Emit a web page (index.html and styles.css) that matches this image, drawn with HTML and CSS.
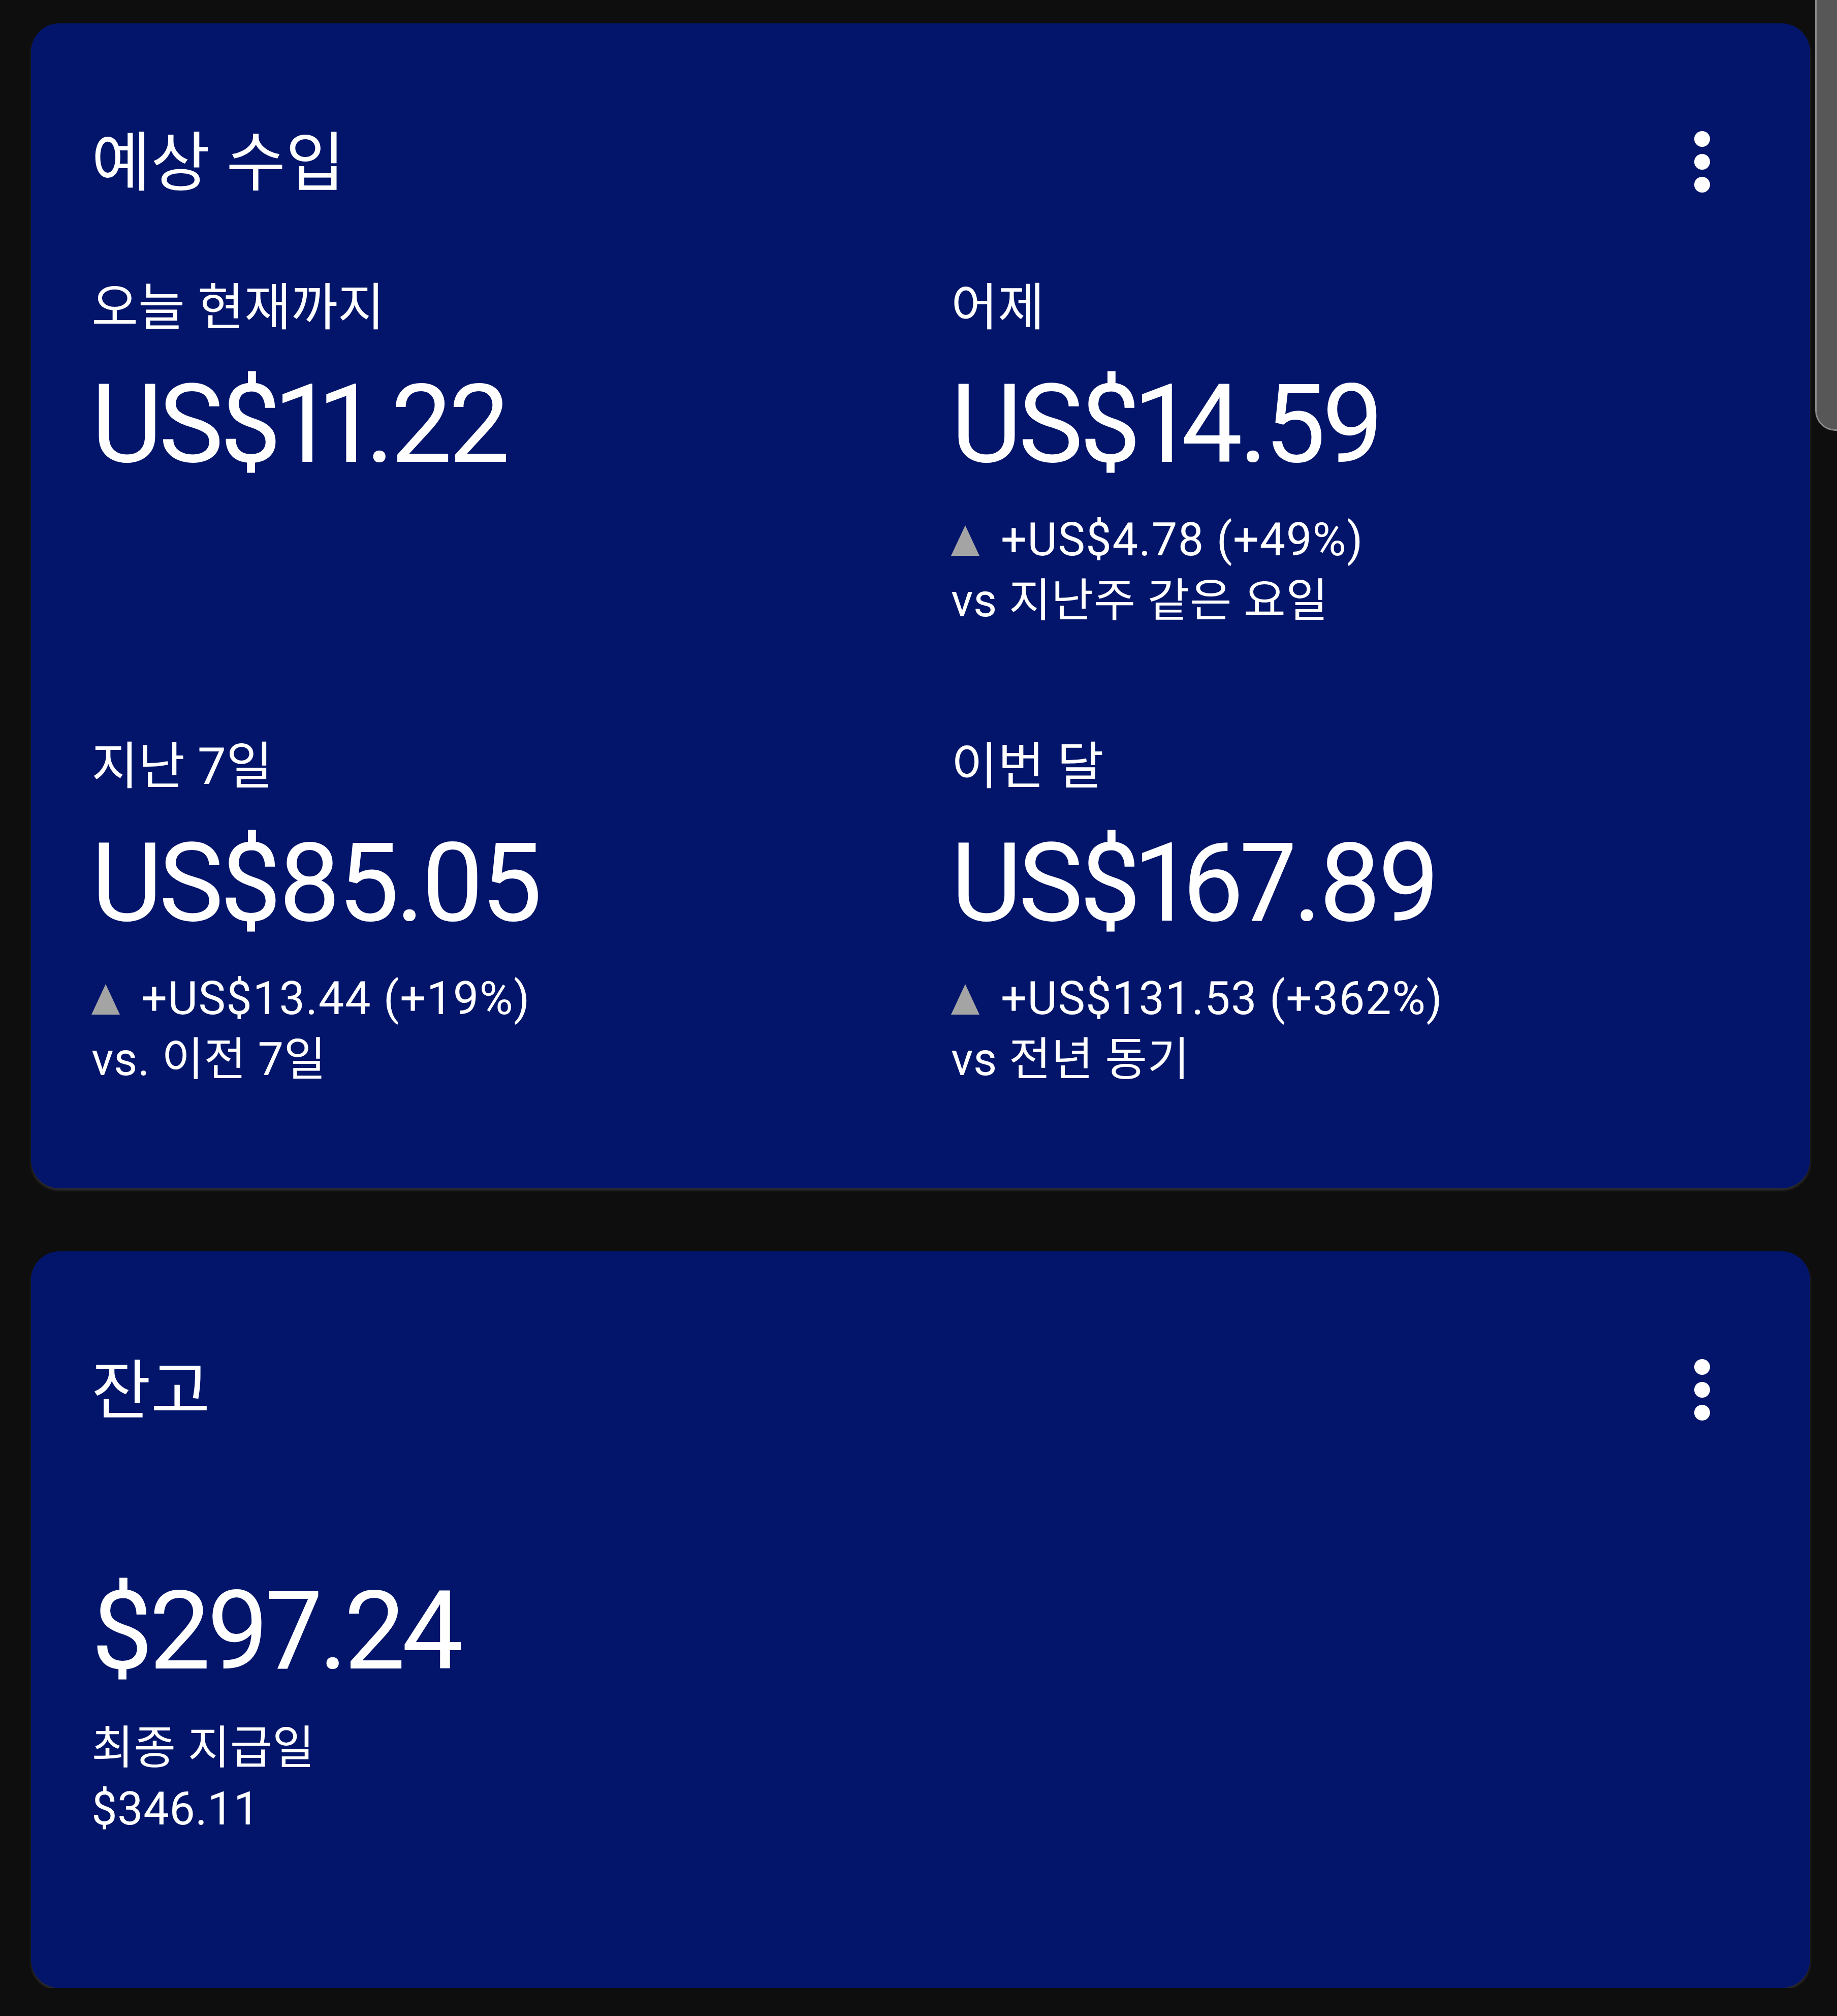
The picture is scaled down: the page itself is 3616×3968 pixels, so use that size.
FILE: index.html
```html
<!DOCTYPE html>
<html lang="ko">
<head>
    <meta charset="UTF-8">
    <meta name="viewport" content="width=device-width, initial-scale=1.0">
    <title>수입</title>
    <link rel="stylesheet" href="styles.css">
</head>
<body>
    <div class="screen">
        <section class="card">
            <header class="card-head">
                <h2 class="card-title">예상 수입</h2>
                <button class="menu-btn" aria-label="더보기">
                    <svg width="31" height="121" viewBox="0 0 31 121"><circle cx="15.5" cy="15.5" r="15.5"/><circle cx="15.5" cy="60.5" r="15.5"/><circle cx="15.5" cy="105.5" r="15.5"/></svg>
                </button>
            </header>
            <div class="stats">
                <div class="stat">
                    <div class="stat-label">오늘 현재까지</div>
                    <div class="stat-value">US$11.22</div>
                </div>
                <div class="stat">
                    <div class="stat-label">어제</div>
                    <div class="stat-value">US$14.59</div>
                    <div class="stat-delta">
                        <svg class="up" width="56" height="60" viewBox="0 0 56 60"><polygon points="28,0 56,60 0,60"/></svg>
                        <span>+US$4.78 (+49%)</span>
                    </div>
                    <div class="stat-compare">vs 지난주 같은 요일</div>
                </div>
                <div class="stat">
                    <div class="stat-label">지난 7일</div>
                    <div class="stat-value">US$85.05</div>
                    <div class="stat-delta">
                        <svg class="up" width="56" height="60" viewBox="0 0 56 60"><polygon points="28,0 56,60 0,60"/></svg>
                        <span>+US$13.44 (+19%)</span>
                    </div>
                    <div class="stat-compare">vs. 이전 7일</div>
                </div>
                <div class="stat">
                    <div class="stat-label">이번 달</div>
                    <div class="stat-value">US$167.89</div>
                    <div class="stat-delta">
                        <svg class="up" width="56" height="60" viewBox="0 0 56 60"><polygon points="28,0 56,60 0,60"/></svg>
                        <span>+US$131.53 (+362%)</span>
                    </div>
                    <div class="stat-compare">vs 전년 동기</div>
                </div>
            </div>
        </section>

        <section class="card card-balance">
            <header class="card-head">
                <h2 class="card-title">잔고</h2>
                <button class="menu-btn" aria-label="더보기">
                    <svg width="31" height="121" viewBox="0 0 31 121"><circle cx="15.5" cy="15.5" r="15.5"/><circle cx="15.5" cy="60.5" r="15.5"/><circle cx="15.5" cy="105.5" r="15.5"/></svg>
                </button>
            </header>
            <div class="balance-value">$297.24</div>
            <div class="balance-caption">최종 지급일<br>$346.11</div>
        </section>
    </div>
    <div class="scroll-thumb"></div>
</body>
</html>
```

FILE: styles.css
```css
body {
    margin: 0;
    background-color: #0e0e0e;
    color: #fff;
    font-family: Roboto, "Noto Sans CJK KR", sans-serif;
}
.screen {
    display: flex;
    flex-direction: column;
    gap: 124px;
    padding: 46px 53px 0 61px;
}
.card {
    background-color: #03156b;
    border-radius: 56px;
    padding: 197px 119px 193px;
    box-shadow: 0 4px 5px rgba(120, 110, 110, 0.35);
}
.card-balance {
    padding-bottom: 292px;
}
.card-head {
    display: flex;
    justify-content: space-between;
    height: 160px;
}
.card-title {
    margin: 0;
    font-size: 127px;
    font-weight: 400;
    line-height: 158px;
}
.menu-btn {
    width: 120px;
    height: 120px;
    margin: 15px 34px 0 0;
    padding: 0;
    border: none;
    background: none;
    display: flex;
    justify-content: center;
    align-items: center;
}
.menu-btn svg {
    fill: #fff;
}
.stats {
    display: grid;
    grid-template-columns: 1fr 1fr;
    column-gap: 120px;
    row-gap: 202px;
    margin-top: 139px;
}
.stat-label {
    font-size: 100px;
    line-height: 128px;
}
.stat-value, .balance-value {
    font-size: 215px;
    line-height: 260px;
    letter-spacing: -7px;
    font-variant-numeric: proportional-nums;
}
.stat-value {
    margin-top: 36px;
}
.stat-delta {
    display: flex;
    align-items: flex-start;
    gap: 42px;
    margin-top: 37px;
    font-size: 90px;
    line-height: 120px;
    letter-spacing: 1.5px;
}
.stat-delta .up {
    margin-top: 31px;
    fill: #a4a4a4;
}
.stat-compare, .balance-caption {
    font-size: 90px;
    line-height: 120px;
    letter-spacing: 0.5px;
}
.balance-value {
    margin-top: 261px;
}
.balance-caption {
    margin-top: 40px;
}
.scroll-thumb {
    position: absolute;
    top: 0;
    right: 0;
    width: 40px;
    height: 845px;
    background-color: #575757;
    border-left: 3px solid #8a8a8a;
    border-bottom: 3px solid #8a8a8a;
    border-bottom-left-radius: 40px;
}
```
